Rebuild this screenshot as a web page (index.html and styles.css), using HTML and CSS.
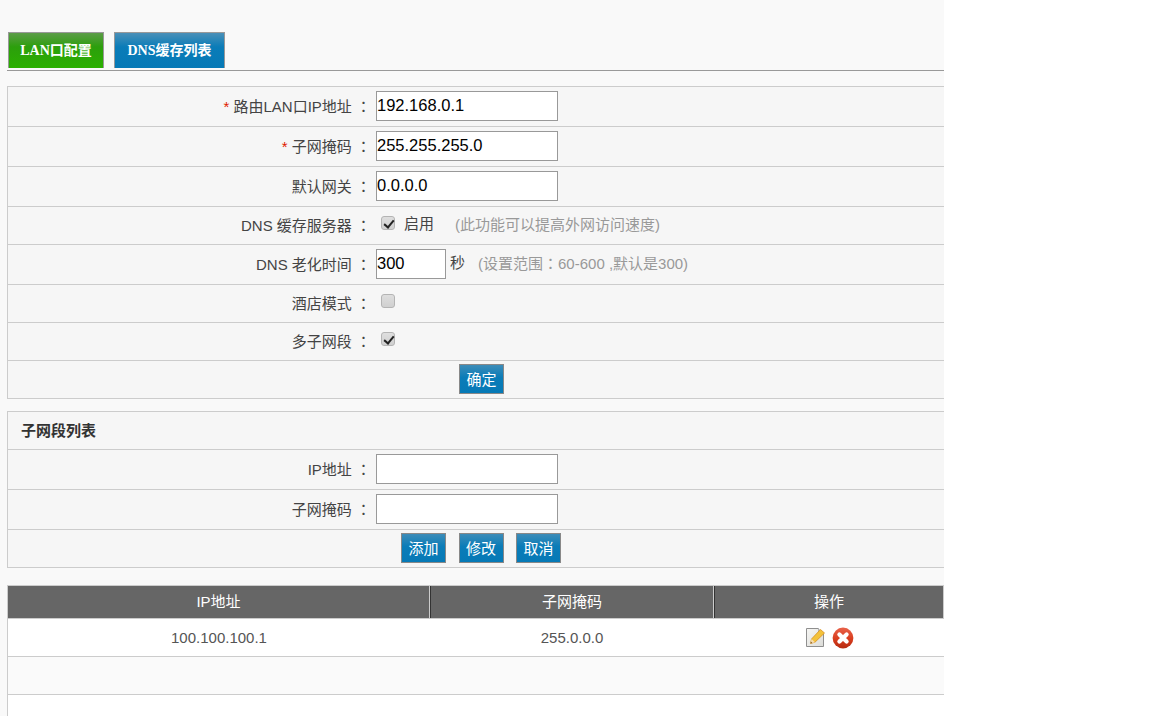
FILE: index.html
```html
<!DOCTYPE html>
<html lang="zh">
<head>
<meta charset="utf-8">
<title>LAN口配置</title>
<link rel="stylesheet" href="styles.css">
</head>
<body>
<main class="page">
  <nav class="tabs">
    <a class="tab tab-green">LAN口配置</a>
    <a class="tab tab-blue">DNS缓存列表</a>
  </nav>

  <section class="panel panel-first">
    <div class="row h40"><label class="lbl"><span class="req">*</span> 路由LAN口IP地址 <span class="colon" lang="zh-TW">：</span></label><input class="inp" value="192.168.0.1"></div>
    <div class="row h40"><label class="lbl"><span class="req">*</span> 子网掩码 <span class="colon" lang="zh-TW">：</span></label><input class="inp" value="255.255.255.0"></div>
    <div class="row h40"><label class="lbl">默认网关 <span class="colon" lang="zh-TW">：</span></label><input class="inp" value="0.0.0.0"></div>
    <div class="row h38"><label class="lbl">DNS 缓存服务器 <span class="colon" lang="zh-TW">：</span></label><span class="cb on"></span><span class="val">启用</span><span class="hint hint-dns">(此功能可以提高外网访问速度)</span></div>
    <div class="row h40"><label class="lbl">DNS 老化时间 <span class="colon" lang="zh-TW">：</span></label><input class="inp inp-short" value="300"><span class="val val-sec">秒</span><span class="hint hint-age">(设置范围<span class="colon" lang="zh-TW">：</span>60-600 ,默认是300)</span></div>
    <div class="row h38"><label class="lbl">酒店模式 <span class="colon" lang="zh-TW">：</span></label><span class="cb"></span></div>
    <div class="row h38"><label class="lbl">多子网段 <span class="colon" lang="zh-TW">：</span></label><span class="cb on"></span></div>
    <div class="row h38 row-btn"><button class="btn">确定</button></div>
  </section>

  <section class="panel panel-second">
    <div class="row h38 row-title"><strong>子网段列表</strong></div>
    <div class="row h40"><label class="lbl">IP地址 <span class="colon" lang="zh-TW">：</span></label><input class="inp"></div>
    <div class="row h40"><label class="lbl">子网掩码 <span class="colon" lang="zh-TW">：</span></label><input class="inp"></div>
    <div class="row h38 row-btn row-btns"><button class="btn">添加</button><button class="btn">修改</button><button class="btn">取消</button></div>
  </section>

  <section class="list">
    <div class="list-head">
      <div class="c1">IP地址</div><div class="c2">子网掩码</div><div class="c3">操作</div>
    </div>
    <div class="list-row">
      <div class="c1">100.100.100.1</div><div class="c2">255.0.0.0</div>
      <div class="c3 ops">
        <svg class="ico" width="21" height="21" viewBox="0 0 21 21">
          <defs><linearGradient id="paper" x1="0" y1="0" x2="1" y2="1"><stop offset="0" stop-color="#f6f6f4"/><stop offset="1" stop-color="#dcdcd8"/></linearGradient></defs>
          <path d="M1.500 1.500h12l5 5v13h-17z" fill="url(#paper)" stroke="#8f8f8f"/>
          <path d="M13.500 1.500v5h5" fill="#fff" stroke="#b0b0b0"/>
          <path d="M5.500 16.500l1-4.500 9-9.500 4 3.500-9.500 9.200z" fill="#f3c23a" stroke="#d98f1e" stroke-width=".8"/>
          <path d="M5.500 16.500l1-4.500 3.600 3.200z" fill="#f7dcae"/>
          <path d="M5.500 16.500l.4-1.900 1.500 1.300z" fill="#7a5a2a"/>
        </svg>
        <svg class="ico" width="22" height="22" viewBox="0 0 22 22">
          <defs><linearGradient id="red" x1="0" y1="0" x2="0" y2="1"><stop offset="0" stop-color="#e8624a"/><stop offset=".55" stop-color="#d93d1e"/><stop offset="1" stop-color="#b52c12"/></linearGradient></defs>
          <circle cx="11" cy="11" r="10.400" fill="url(#red)"/>
          <path d="M7.400 7.400l7.200 7.200M14.600 7.400l-7.200 7.200" stroke="#fff" stroke-width="4.200" stroke-linecap="round"/>
        </svg>
      </div>
    </div>
    <div class="list-row list-row-alt"></div>
    <div class="list-row list-row-last"></div>
  </section>
</main>
</body>
</html>
```

FILE: styles.css
```css
html { background: #fff; height: 100%; overflow: hidden; }
body {
  margin: 0;
  font-family: "Liberation Sans", "Noto Sans CJK SC", sans-serif;
  font-size: 15px;
  color: #444;
}
.page { width: 944px; height: 716px; background: #f9f9f9; padding-top: 32px; box-sizing: border-box; overflow: hidden; }

.tabs {
  display: flex;
  gap: 10px;
  margin-left: 7px;
  padding-left: 1px;
  height: 38px;
  border-bottom: 1px solid #999;
}
.tab {
  height: 36px;
  line-height: 35px;
  box-sizing: border-box;
  border: 1px solid #999;
  border-bottom: 0;
  color: #fff;
  font-family: "Liberation Serif", "Noto Sans CJK SC", serif;
  font-weight: bold;
  font-size: 14px;
  text-align: center;
}
.tab-green { width: 96px; background: linear-gradient(#5c9c48 0, #2c9f0c 40%, #2bb000 100%); }
.tab-blue { width: 111px; background: linear-gradient(#4a90b8 0, #0a7cb8 40%, #0679b6 100%); }

.panel { margin-left: 7px; border: 1px solid #ccc; border-right: 0; background: #f6f6f6; }
.panel-first { margin-top: 15px; }
.panel-second { margin-top: 12px; }
.row { display: flex; align-items: center; box-sizing: border-box; border-bottom: 1px solid #ccc; padding-bottom: 1px; }
.row:last-child { border-bottom: 0; height: 37px; }
.h40 { height: 40px; }
.h38 { height: 38px; }
.lbl { width: 363px; text-align: right; flex: none; white-space: nowrap; margin: -2px 5px 0 0; }
.colon { font-family: "Noto Sans CJK TC", sans-serif; }
.req { color: #e01b00; }
.inp {
  width: 182px;
  height: 30px;
  box-sizing: border-box;
  border: 1px solid #999;
  background: #fff;
  padding: 0 0 2px;
  font: 16.500px "Liberation Sans", sans-serif;
  color: #000;
  outline: 0;
  border-radius: 0;
}
.inp-short { width: 70px; }
.cb {
  width: 14px;
  height: 14px;
  box-sizing: border-box;
  margin: -4px 0 0 5px;
  border: 1px solid #b4b4b4;
  border-radius: 3px;
  background: linear-gradient(#dedede, #d0d0d0);
  position: relative;
  flex: none;
}
.cb.on::after {
  content: "";
  position: absolute;
  left: 3.500px;
  top: .5px;
  width: 4px;
  height: 8px;
  border: solid #222;
  border-width: 0 2.500px 2.500px 0;
  transform: rotate(40deg);
}
.val { color: #444; margin-left: 9px; margin-top: -5px; }
.val-sec { margin-left: 4px; margin-top: -5px; }
.hint { color: #999; margin-top: -3px; }
.hint-dns { margin-left: 21px; }
.hint-age { margin-left: 13px; }
.row-btn { justify-content: center; padding-left: 11px; }
.row-btns { gap: 12.500px; padding-left: 10px; }
.row-title { padding: 0 0 3px 13px; color: #333; }
.btn {
  width: 45px;
  height: 30px;
  padding: 0 0 2px;
  border: 1px solid #888;
  background: linear-gradient(#3d8cb8 0, #0a7cb8 45%, #0679b6 100%);
  color: #fff;
  font: 15px "Liberation Sans", "Noto Sans CJK SC", sans-serif;
}

.list { margin: 17px 0 0 7px; border-top: 1px solid #ccc; border-left: 1px solid #ccc; }
.list-head { display: flex; height: 32px; background: #666; color: #fff; line-height: 31px; text-align: center; border-bottom: 1px solid #ccc; }
.list-row { display: flex; height: 38px; box-sizing: border-box; border-bottom: 1px solid #ccc; background: #fff; line-height: 37px; text-align: center; color: #555; }
.list-row-alt { background: #fafafa; }
.list-row-last { border-bottom: 0; }
.c1 { width: 422px; flex: none; box-sizing: border-box; }
.c2 { width: 284px; flex: none; box-sizing: border-box; }
.c3 { flex: 1; box-sizing: border-box; }
.list-head .c1, .list-head .c2, .list-head .c3 { border-right: 1px solid #ccc; }
.list-head .c2, .list-head .c3 { border-left: 1px solid #333; }
.ops { display: flex; justify-content: center; align-items: center; gap: 6px; }
.ico { display: block; flex: none; }
```
